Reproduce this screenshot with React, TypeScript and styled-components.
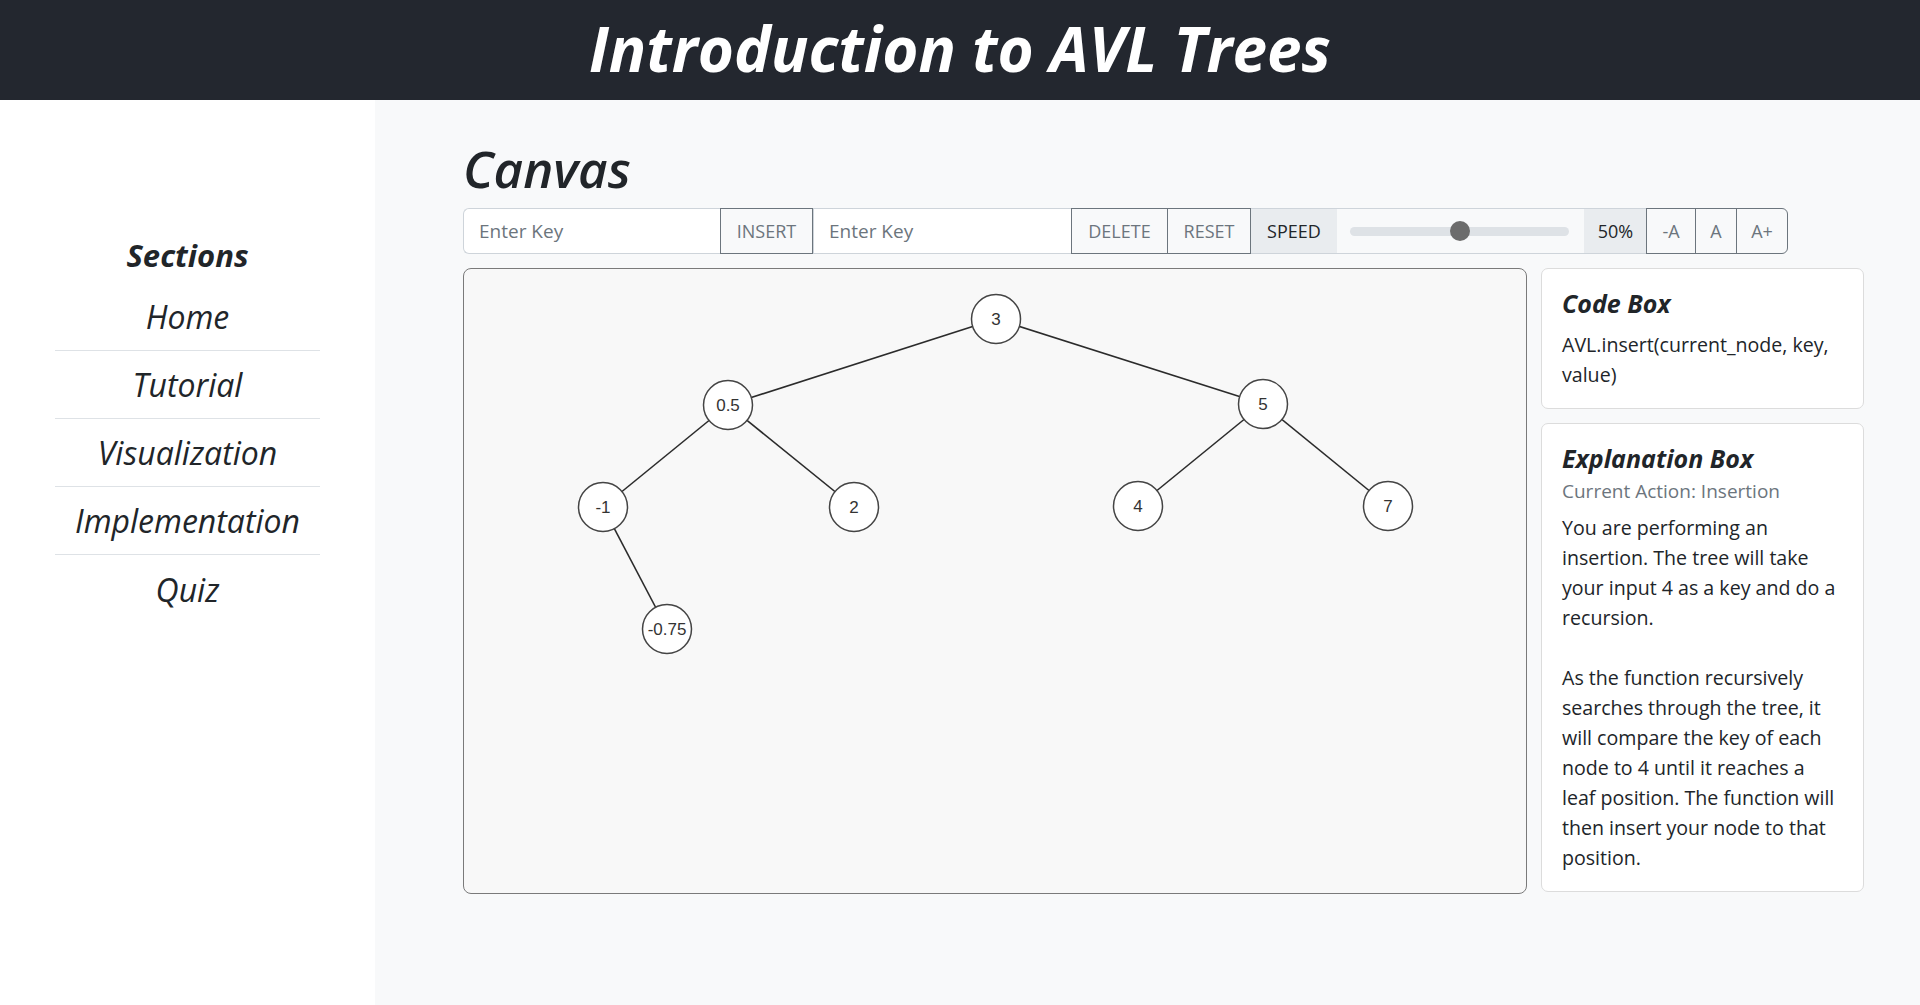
import styled, { createGlobalStyle } from "styled-components";

const GlobalStyle = createGlobalStyle`
  html, body {
    margin: 0;
    padding: 0;
  }
  body {
    font-family: "Open Sans", "DejaVu Sans", sans-serif;
    color: #212529;
    background: #f8f9fa;
  }
  * {
    box-sizing: border-box;
  }
`;

interface INode {
  key: string;
  x: number;
  y: number;
}

const nodes: INode[] = [
  { key: "3", x: 532, y: 50 },
  { key: "0.5", x: 264, y: 136 },
  { key: "5", x: 799, y: 135 },
  { key: "-1", x: 139, y: 238 },
  { key: "2", x: 390, y: 238 },
  { key: "4", x: 674, y: 237 },
  { key: "7", x: 924, y: 237 },
  { key: "-0.75", x: 203, y: 360 },
];

const edges: [number, number][] = [
  [0, 1],
  [0, 2],
  [1, 3],
  [1, 4],
  [2, 5],
  [2, 6],
  [3, 7],
];

const sections = ["Home", "Tutorial", "Visualization", "Implementation", "Quiz"];

const App: React.FunctionComponent = () => {
  return (
    <>
      <GlobalStyle />
      <Header>
        <Title>Introduction to AVL Trees</Title>
      </Header>
      <Body>
        <Sidebar>
          <SideTitle>Sections</SideTitle>
          <SideList>
            {sections.map((s) => (
              <SideItem key={s}>{s}</SideItem>
            ))}
          </SideList>
        </Sidebar>

        <Main>
          <Heading>Canvas</Heading>
          <Toolbar>
            <KeyInput placeholder="Enter Key" $width={258} $first />
            <OutlineBtn $width={93}>INSERT</OutlineBtn>
            <KeyInput placeholder="Enter Key" $width={259} />
            <OutlineBtn $width={97}>DELETE</OutlineBtn>
            <OutlineBtn $width={84}>RESET</OutlineBtn>
            <Addon $width={86}>SPEED</Addon>
            <SliderBox>
              <Track>
                <Thumb />
              </Track>
            </SliderBox>
            <Addon $width={63}>50%</Addon>
            <OutlineBtn $width={50}>-A</OutlineBtn>
            <OutlineBtn $width={42}>A</OutlineBtn>
            <OutlineBtn $width={52} $last>
              A+
            </OutlineBtn>
          </Toolbar>

          <Workspace>
            <CanvasBox>
              <svg width="1062" height="624">
                {edges.map(([a, b]) => (
                  <line
                    key={`${a}-${b}`}
                    x1={nodes[a].x}
                    y1={nodes[a].y}
                    x2={nodes[b].x}
                    y2={nodes[b].y}
                    stroke="#2b2b2b"
                    strokeWidth="1.6"
                  />
                ))}
                {nodes.map((n) => (
                  <g key={n.key}>
                    <circle cx={n.x} cy={n.y} r="24.5" fill="#fff" stroke="#444" strokeWidth="1.5" />
                    <text
                      x={n.x}
                      y={n.y + 6}
                      textAnchor="middle"
                      fontFamily="Liberation Sans, Arial, sans-serif"
                      fontSize="17"
                      fill="#333"
                    >
                      {n.key}
                    </text>
                  </g>
                ))}
              </svg>
            </CanvasBox>

            <Side>
              <Card>
                <CardTitle $gap={11}>Code Box</CardTitle>
                <CardText>AVL.insert(current_node, key, value)</CardText>
              </Card>
              <Card>
                <CardTitle $gap={4}>Explanation Box</CardTitle>
                <Muted>Current Action: Insertion</Muted>
                <CardText>
                  You are performing an insertion. The tree will take your input 4 as a key and do a recursion.
                </CardText>
                <Spacer />
                <CardText>
                  As the function recursively searches through the tree, it will compare the key of each node to 4
                  until it reaches a leaf position. The function will then insert your node to that position.
                </CardText>
              </Card>
            </Side>
          </Workspace>
        </Main>
      </Body>
    </>
  );
};

const Header = styled.header`
  height: 100px;
  background: #23272f;
  display: flex;
  align-items: center;
  justify-content: center;
`;

const Title = styled.h1`
  margin: 0 0 4px 0;
  color: #fff;
  font-size: 62px;
  font-style: italic;
  font-weight: 700;
`;

const Body = styled.div`
  display: flex;
  min-height: 905px;
`;

const Sidebar = styled.aside`
  width: 375px;
  background: #fff;
  padding-top: 133px;
  display: flex;
  flex-direction: column;
  align-items: center;
  font-style: italic;
`;

const SideTitle = styled.div`
  font-size: 31px;
  font-weight: 700;
  line-height: 44px;
  margin-bottom: 6px;
`;

const SideList = styled.ul`
  list-style: none;
  margin: 0;
  padding: 0;
  width: 265px;
`;

const SideItem = styled.li`
  height: 68px;
  display: flex;
  align-items: center;
  justify-content: center;
  font-size: 32px;
  border-bottom: 1px solid #dee2e6;
  &:last-child {
    border-bottom: none;
  }
`;

const Main = styled.main`
  flex: 1;
  padding: 38px 56px 0 88px;
`;

const Heading = styled.h2`
  margin: 0 0 10px 0;
  font-size: 51px;
  line-height: 60px;
  font-style: italic;
  font-weight: 600;
`;

const Toolbar = styled.div`
  display: flex;
  height: 46px;
  width: 1331px;
  margin-bottom: 14px;
`;

const KeyInput = styled.input<{ $width: number; $first?: boolean }>`
  width: ${(p) => p.$width}px;
  height: 100%;
  border: 1px solid #ced4da;
  border-right: none;
  border-radius: ${(p) => (p.$first ? "6px 0 0 6px" : "0")};
  background: #fff;
  padding: 0 15px;
  font-family: inherit;
  font-size: 19px;
  color: #212529;
  outline: none;
  &::placeholder {
    color: #6c757d;
  }
`;

const OutlineBtn = styled.button<{ $width: number; $last?: boolean }>`
  width: ${(p) => p.$width}px;
  height: 100%;
  border: 1px solid #6c757d;
  margin-left: -1px;
  border-radius: ${(p) => (p.$last ? "0 6px 6px 0" : "0")};
  background: transparent;
  color: #6c757d;
  font-family: inherit;
  font-size: 18px;
  padding: 0;
  cursor: pointer;
`;

const Addon = styled.div<{ $width: number }>`
  width: ${(p) => p.$width}px;
  height: 100%;
  display: flex;
  align-items: center;
  justify-content: center;
  background: #e9ecef;
  border-top: 1px solid #ced4da;
  border-bottom: 1px solid #ced4da;
  font-size: 18px;
  color: #212529;
`;

const SliderBox = styled.div`
  width: 247px;
  height: 100%;
  display: flex;
  align-items: center;
  padding: 0 15px 0 13px;
  border-top: 1px solid #ced4da;
  border-bottom: 1px solid #ced4da;
  background: #f8f9fa;
`;

const Track = styled.div`
  position: relative;
  flex: 1;
  height: 9px;
  border-radius: 5px;
  background: #dee2e6;
`;

const Thumb = styled.span`
  position: absolute;
  left: 50%;
  top: 50%;
  width: 20px;
  height: 20px;
  margin: -10px 0 0 -10px;
  border-radius: 50%;
  background: #6c6c6c;
`;

const Workspace = styled.div`
  display: grid;
  grid-template-columns: 1064px 323px;
  gap: 14px;
  align-items: start;
`;

const CanvasBox = styled.div`
  height: 626px;
  border: 1px solid #7a7a7a;
  border-radius: 8px;
  background: #f8f8f8;
  overflow: hidden;
  svg {
    display: block;
  }
`;

const Side = styled.div`
  display: flex;
  flex-direction: column;
  gap: 14px;
`;

const Card = styled.section`
  background: #fff;
  border: 1px solid #dcdcdc;
  border-radius: 7px;
  padding: 18px 20px 18px 20px;
`;

const CardTitle = styled.h4<{ $gap: number }>`
  margin: 0 0 ${(p) => p.$gap}px 0;
  font-size: 25px;
  line-height: 32px;
  font-style: italic;
  font-weight: 700;
`;

const Muted = styled.div`
  color: #6c757d;
  font-size: 19px;
  line-height: 26px;
  margin-bottom: 9px;
`;

const CardText = styled.p`
  margin: 0;
  font-size: 19.6px;
  line-height: 30px;
`;

const Spacer = styled.div`
  height: 30px;
`;

export default App;
